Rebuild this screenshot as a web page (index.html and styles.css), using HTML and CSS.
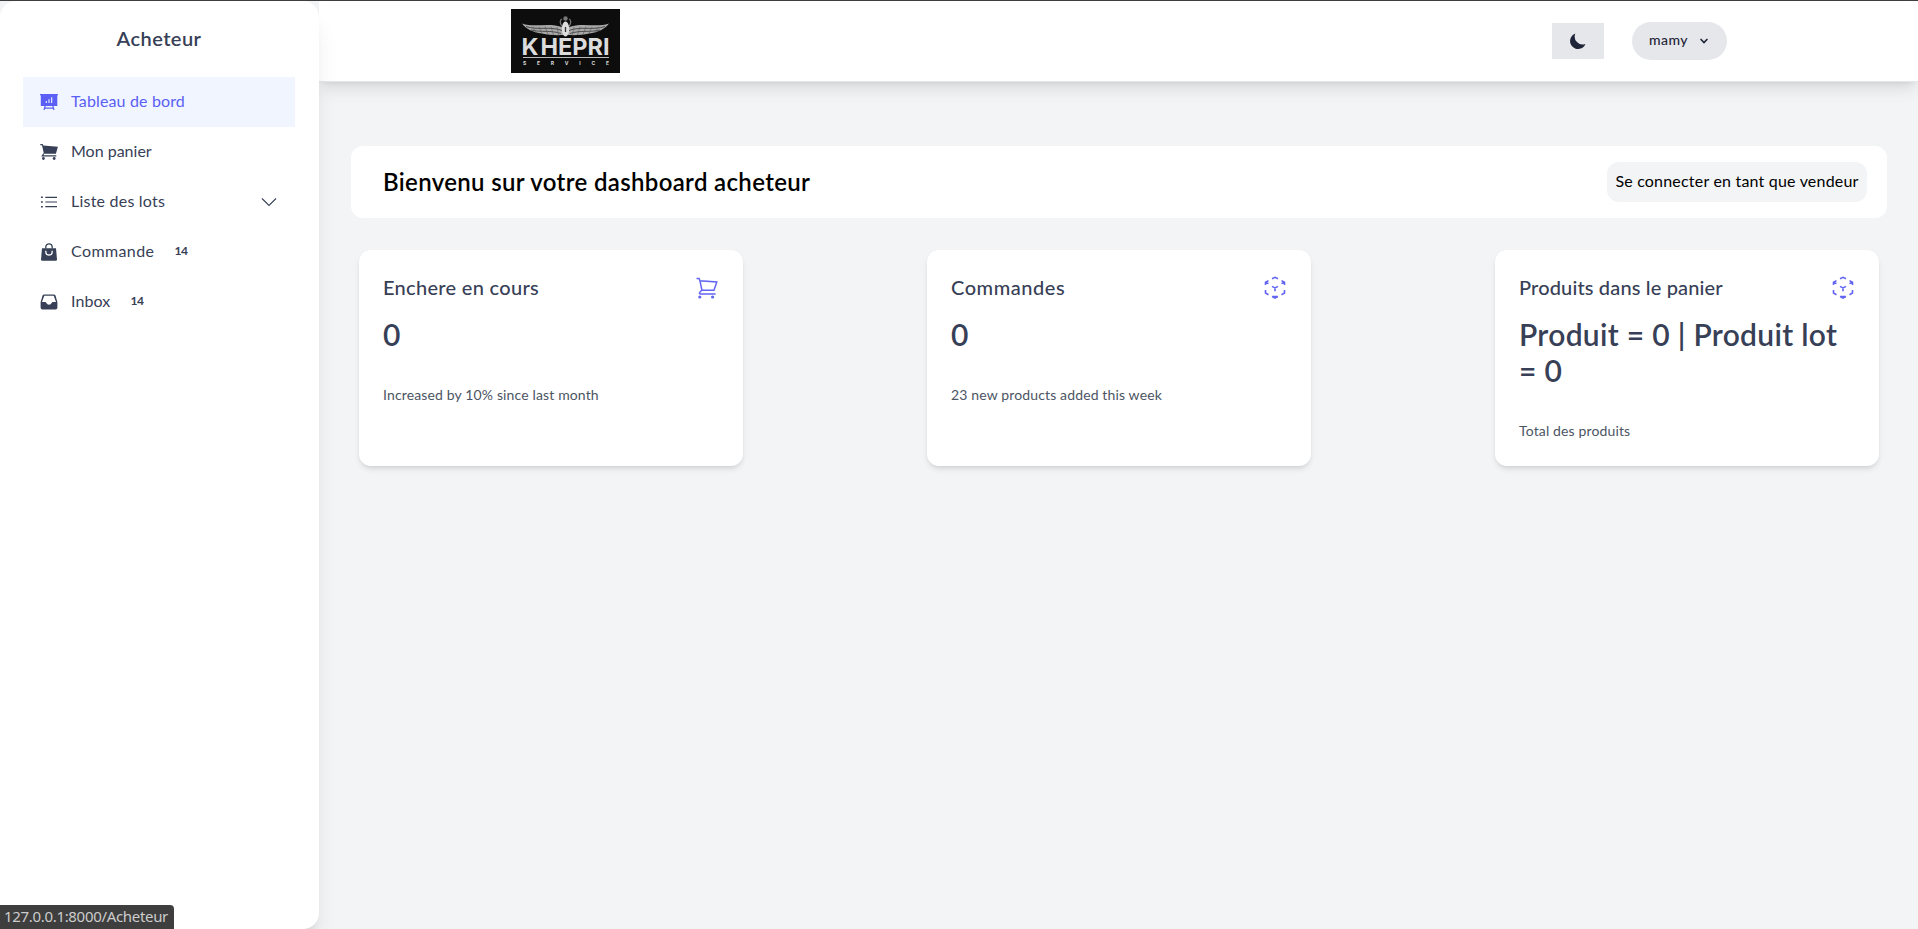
FILE: index.html
```html
<!DOCTYPE html>
<html lang="fr">
<head>
<meta charset="utf-8">
<title>Dashboard acheteur</title>
<link rel="stylesheet" href="styles.css">
</head>
<body>
<svg class="defs" width="0" height="0">
  <symbol id="cart-line" viewBox="0 0 24 24">
    <path d="M1.500 2.600h2.600l.8 2.100L21.800 6l-2.800 8.200H6.900L4.900 4.400M6.800 14l-2.200 2.600c-.5.8 0 1.400.8 1.400h15.200" fill="none" stroke="currentColor" stroke-width="1.500"/>
    <circle cx="4.800" cy="21" r="1.600" fill="currentColor"/><circle cx="17.600" cy="21" r="1.600" fill="currentColor"/>
  </symbol>
  <symbol id="cube" viewBox="0 0 24 24">
    <path d="M9 2.700l3-1.400 3 1.400M2.500 9V6.300l3-1.700M5.500 7.600l-3-1.600M21.500 9V6.300l-3-1.700M18.500 7.600l3-1.600M2.500 14v3l3 1.700M21.500 14v3l-3 1.700M9 10.400l3 1.500 3-1.500M12 12v3.200M9 20.500l3 1.500 3-1.500M12 22v-2.200M9.500 20.500h5" fill="none" stroke="currentColor" stroke-width="1.600"/>
  </symbol>
</svg>
<div class="app">
  <aside class="sidebar">
    <h2 class="sidebar-title">Acheteur</h2>
    <nav class="nav">
      <a class="item active"><svg class="ico" viewBox="0 0 18 18"><path d="M0 1h18v1.300h-.7V13H.8V2.300H0z" fill="currentColor"/><path d="M5.200 13L4 17M12.800 13l1.200 4M4.700 15.200h8.600" stroke="currentColor" stroke-width="1.200"/><path d="M6.300 10V8M9 10V6.300M11.700 10V4.200" stroke="#f0f5ff" stroke-width="1.100"/></svg><span class="label t1">Tableau de bord</span></a>
      <a class="item"><svg class="ico" viewBox="0 0 18 18"><path d="M.3 1h2.400l.6 1.500L17.900 3.700l-2 7H3.900L2 2.200H.3z" fill="currentColor"/><path d="M3.800 10.500l-1.500 2.300h14" fill="none" stroke="currentColor" stroke-width="1.200"/><circle cx="3.400" cy="15.500" r="1.400" fill="currentColor"/><circle cx="14.200" cy="15.500" r="1.400" fill="currentColor"/></svg><span class="label t2">Mon panier</span></a>
      <a class="item"><svg class="ico" viewBox="0 0 18 18"><path d="M5.300 4.300H17M5.300 9H17M5.300 13.700H17" stroke="currentColor" stroke-width="1.200"/><path d="M1 4.300h1.800M1 9h1.800M1 13.700h1.800" stroke="currentColor" stroke-width="1.600"/></svg><span class="label t3">Liste des lots</span><svg class="chev" viewBox="0 0 16 16"><path d="M1 4.500l7 7 7-7" fill="none" stroke="currentColor" stroke-width="1.100"/></svg></a>
      <a class="item"><svg class="ico" viewBox="0 0 18 18"><path d="M2 5.200h14l1 11.300q0 1.300-1.300 1.300H2.300Q1 17.800 1 16.500z" fill="currentColor"/><path d="M5.800 5.500V4a3.200 3.200 0 016.400 0v1.500" fill="none" stroke="currentColor" stroke-width="1.300"/><path d="M5.800 7.800v1a3.200 3.200 0 006.400 0v-1" fill="none" stroke="#fff" stroke-width="1.300"/></svg><span class="label t4">Commande</span><b class="label badge">14</b></a>
      <a class="item"><svg class="ico" viewBox="0 0 18 18"><path d="M4.200 1.400h9.600q1.200 0 1.700 1.200l1.900 6.600v5.300q0 1.900-1.900 1.900h-13q-1.900 0-1.900-1.900V9.200l1.900-6.600q.5-1.200 1.700-1.200z" fill="currentColor"/><path d="M4.300 2.700h9.400L16 9h-3.300q-.6 0-.9.700-1 2-2.800 2t-2.800-2Q5.900 9 5.300 9H2z" fill="#fff"/></svg><span class="label t5">Inbox</span><b class="label badge">14</b></a>
    </nav>
  </aside>
  <div class="main">
    <header class="header">
      <svg class="logo" viewBox="0 0 109 64">
        <rect width="109" height="64" fill="#0d0d0d"/>
        <g id="wing">
          <path d="M11 14.500C24 19 38 13 52 18.500V26c-8 .5-15-.3-21-1.500C22 23.500 15 20 11 14.500z" fill="#a9a9a9"/>
          <path d="M15 17.500c12 4 24-.5 36 4M20 21c10 2.500 20 0 30 3.500" fill="none" stroke="#333" stroke-width=".8"/>
          <path d="M22 18l3 6M28 18l3 6.500M34 17.500l3 8M40 17.500l2.500 8.500M46 18l1.500 8" stroke="#555" stroke-width=".6"/>
        </g>
        <use href="#wing" transform="matrix(-1 0 0 1 109 0)"/>
        <path d="M51 17.500q-3.500-6 0-7.500M58 17.500q3.500-6 0-7.500" fill="none" stroke="#777" stroke-width="1.300"/>
        <circle cx="54.500" cy="9.500" r="2.200" fill="#777"/>
        <ellipse cx="54.500" cy="20" rx="3.700" ry="7.500" fill="#ddd"/><path d="M54.500 18v5" stroke="#333" stroke-width="1.300"/>
        <text class="logo-k" x="10.500" y="46" textLength="17" lengthAdjust="spacingAndGlyphs">K</text>
        <text class="logo-name" x="29.500" y="46" textLength="69" lengthAdjust="spacingAndGlyphs">HEPRI</text>
        <path d="M12 48.500h86" stroke="#bbb"/>
        <text class="logo-sub" x="12" y="55.500" textLength="86">SERVICE</text>
      </svg>
      <div class="actions">
        <button class="theme"><svg width="16" height="16" viewBox="0 0 16 16"><path d="M5.300.5A8 8 0 0015.500 11 8 8 0 115.300.5z" fill="currentColor"/></svg></button>
        <button class="user"><span class="label">mamy</span><svg width="8" height="6" viewBox="0 0 8 6"><path d="M.6 1l3.400 3.500L7.400 1" fill="none" stroke="currentColor" stroke-width="1.600"/></svg></button>
      </div>
    </header>
    <main class="content">
      <section class="banner">
        <h1 class="welcome">Bienvenu sur votre dashboard acheteur</h1>
        <button class="switch">Se connecter en tant que vendeur</button>
      </section>
      <section class="cards">
        <article class="card"><div class="card-head"><h3 class="c1">Enchere en cours</h3><svg class="card-ico"><use href="#cart-line"/></svg></div><p class="value">0</p><p class="note">Increased by 10% since last month</p></article>
        <article class="card"><div class="card-head"><h3 class="c2">Commandes</h3><svg class="card-ico"><use href="#cube"/></svg></div><p class="value">0</p><p class="note">23 new products added this week</p></article>
        <article class="card"><div class="card-head"><h3 class="c3">Produits dans le panier</h3><svg class="card-ico"><use href="#cube"/></svg></div><p class="value">Produit = 0 | Produit lot<br>= 0</p><p class="note">Total des produits</p></article>
      </section>
    </main>
  </div>
</div>
<div class="status">127.0.0.1:8000/Acheteur</div>
</body>
</html>
```
FILE: styles.css
```css
* { box-sizing: border-box; }
body, h1, h2, h3, p { margin: 0; }
body { height: 929px; overflow: hidden; background: #f3f4f6; color: #374151; font: 16px/24px Lato, "Open Sans", sans-serif; }
button { border: 0; padding: 0; font: inherit; color: inherit; }
.defs { position: absolute; }
.app { display: flex; height: 929px; border-top: 1px solid #3f3d40; }
.sidebar { width: 319px; flex: none; padding: 23px 24px 0 23px; background: #fff; border-radius: 16px; box-shadow: 0 20px 25px -5px rgba(0,0,0,.1), 0 8px 10px -6px rgba(0,0,0,.1); z-index: 2; color: #374056; }
.sidebar-title { font-size: 20px; line-height: 28px; font-weight: 600; text-align: center; letter-spacing: .45px; margin-bottom: 25px; }
.nav { display: flex; flex-direction: column; }
.item { display: flex; align-items: center; height: 50px; padding: 0 17px; }
.label { padding-bottom: 2px; }
.t1 { letter-spacing: .15px; }
.t2 { letter-spacing: 0; }
.t3 { letter-spacing: .22px; }
.t4 { letter-spacing: .4px; }
.t5 { letter-spacing: .1px; }
.active { background: #f0f5ff; color: #5b5ff5; }
.ico { width: 18px; height: 18px; margin-right: 13px; }
.chev { width: 16px; height: 16px; margin-left: auto; margin-right: 1px; }
.badge { font-size: 12px; font-weight: 700; margin-left: 20px; letter-spacing: -.3px; }
.main { flex: 1; }
.header { display: flex; align-items: center; justify-content: space-between; height: 81px; padding: 0 191px 0 192px; background: #fff; border-bottom: 1px solid #e5e7eb; box-shadow: 0 10px 15px -3px rgba(0,0,0,.1), 0 4px 6px -4px rgba(0,0,0,.1); }
.logo { width: 109px; height: 64px; }
.logo text { font-family: Inter, "Open Sans", sans-serif; fill: #dcdcdc; }
.logo .logo-k, .logo .logo-name { font-size: 23.5px; font-weight: 700; }
.logo .logo-sub { font-size: 5px; font-weight: 700; }
.actions { display: flex; align-items: center; gap: 28px; color: #1f2438; }
.theme { display: flex; align-items: center; justify-content: center; width: 52px; height: 36px; background: #e5e7eb; }
.user { display: flex; align-items: center; gap: 12px; width: 95px; height: 38px; padding-left: 17px; border-radius: 19px; background: #e5e7eb; font-size: 14px; font-weight: 500; letter-spacing: .45px; }
.content { padding: 64px 31px 0 32px; }
.banner { display: flex; align-items: center; justify-content: space-between; height: 72px; padding: 0 20px 0 32px; border-radius: 12px; background: #fff; color: #000; }
.welcome { font-size: 24px; font-weight: 600; letter-spacing: .34px; padding-bottom: 1px; }
.switch { width: 260px; height: 40px; padding-bottom: 2px; border-radius: 12px; background: #f3f4f6; letter-spacing: .2px; }
.cards { display: flex; justify-content: space-between; padding: 32px 8px 0; }
.card { width: 384px; height: 216px; padding: 24px; border-radius: 12px; background: #fff; box-shadow: 0 4px 6px -1px rgba(0,0,0,.1), 0 2px 4px -2px rgba(0,0,0,.1); color: #374056; }
.card-head { display: flex; align-items: center; justify-content: space-between; height: 28px; margin-bottom: 14px; }
.card-head h3 { padding-bottom: 2px; font-size: 20px; font-weight: 500; }
.c1 { letter-spacing: .3px; }
.c2 { letter-spacing: .55px; }
.c3 { letter-spacing: .15px; }
.card-ico { width: 24px; height: 24px; color: #6366f1; }
.value { font-size: 30px; line-height: 36px; font-weight: 600; letter-spacing: .3px; }
.note { margin-top: 33px; font-size: 14px; line-height: 20px; color: #4b5563; letter-spacing: .14px; }
.status { position: absolute; z-index: 3; left: 0; bottom: 0; width: 174px; height: 24px; padding-left: 4px; border-radius: 0 4px 0 0; background: #3e3e3e; color: #ccc; font: 15px/22px "Noto Sans", sans-serif; letter-spacing: -.32px; white-space: nowrap; }
```
